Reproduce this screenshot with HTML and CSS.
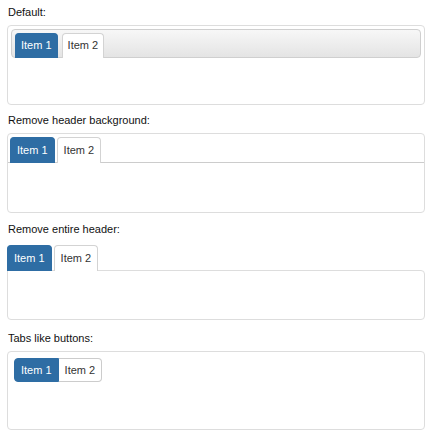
FILE: index.html
```html
<!DOCTYPE html>
<html lang="en">
<head>
    <meta charset="UTF-8">
    <title>Tabs</title>
    <link rel="stylesheet" href="styles.css">
</head>
<body>

    <!-- default -->
    <div class="section section-default">
        <div class="label">Default:</div>
        <div class="tabs">
            <ul class="tab-nav">
                <li class="tab active">Item 1</li>
                <li class="tab">Item 2</li>
            </ul>
            <div class="tab-panel"></div>
        </div>
    </div>

    <!-- no header background -->
    <div class="section section-nobg">
        <div class="label">Remove header background:</div>
        <div class="tabs">
            <ul class="tab-nav">
                <li class="tab active">Item 1</li>
                <li class="tab">Item 2</li>
            </ul>
            <div class="tab-panel"></div>
        </div>
    </div>

    <!-- no header at all -->
    <div class="section section-noheader">
        <div class="label">Remove entire header:</div>
        <div class="tabs">
            <ul class="tab-nav">
                <li class="tab active">Item 1</li>
                <li class="tab">Item 2</li>
            </ul>
            <div class="tab-panel"></div>
        </div>
    </div>

    <!-- buttons -->
    <div class="section section-buttons">
        <div class="label">Tabs like buttons:</div>
        <div class="tabs">
            <ul class="tab-nav">
                <li class="tab active">Item 1</li>
                <li class="tab">Item 2</li>
            </ul>
            <div class="tab-panel"></div>
        </div>
    </div>

</body>
</html>
```

FILE: styles.css
```css
body {
    font-family: 'Liberation Sans', Arial, sans-serif;
    font-size: 11px;
    color: #111;
    background-color: #fff;
    margin: 0;
    padding: 5px 6px 0 7px;
}

.label {
    height: 14px;
    line-height: 14px;
    padding-left: 1px;
    margin-bottom: 6px;
}

.tab-nav {
    list-style: none;
    margin: 0;
    display: flex;
}

.tab {
    position: relative;
    height: 24px;
    line-height: 24px;
    padding: 0 6px;
    margin-bottom: -1px;
    padding-bottom: 1px;
    border: 1px solid #d3d3d3;
    border-bottom: none;
    border-radius: 4px 4px 0 0;
    background-color: #fff;
    color: #333;
}

.tab.active {
    background-color: #2e6da4;
    border-color: #2e6da4;
    color: #fff;
}

/* default */
.section-default {
    margin-bottom: 8px;
}

.section-default .tabs {
    border: 1px solid #ddd;
    border-radius: 4px;
    padding: 3px;
}

.section-default .tab-nav {
    padding: 3px 3px 0;
    gap: 4px;
    border: 1px solid #cfcfcf;
    border-radius: 4px;
    background: linear-gradient(#f7f7f7, #e4e4e4);
}

.section-default .tab {
    height: 23px;
    line-height: 23px;
    padding-left: 5px;
    padding-right: 5px;
}

.section-default .tab-panel {
    height: 43px;
}

/* no header background */
.section-nobg {
    margin-bottom: 9px;
}

.section-nobg .tabs {
    border: 1px solid #ddd;
    border-radius: 4px;
}

.section-nobg .tab-nav {
    padding: 3px 2px 0;
    gap: 2px;
    border-bottom: 1px solid #ccc;
}

.section-nobg .tab-panel {
    height: 49px;
}

/* no header */
.section-noheader {
    margin-bottom: 11px;
}

.section-noheader .label {
    margin-bottom: 9px;
}

.section-noheader .tab-nav {
    padding: 0;
    gap: 2px;
}

.section-noheader .tab-panel {
    height: 48px;
    border: 1px solid #ddd;
    border-radius: 0 4px 4px 4px;
}

/* buttons */
.section-buttons .tabs {
    border: 1px solid #ddd;
    border-radius: 4px;
    padding: 6px;
    height: 65px;
}

.section-buttons .tab-nav {
    padding: 0;
}

.section-buttons .tab {
    height: 22px;
    line-height: 22px;
    margin: 0;
    padding: 0 6px;
    border: 1px solid #ccc;
    border-radius: 0;
}

.section-buttons .tab.active {
    border-color: #2e6da4;
    border-radius: 4px 0 0 4px;
}

.section-buttons .tab:last-child {
    border-left: none;
    border-radius: 0 4px 4px 0;
}
```
